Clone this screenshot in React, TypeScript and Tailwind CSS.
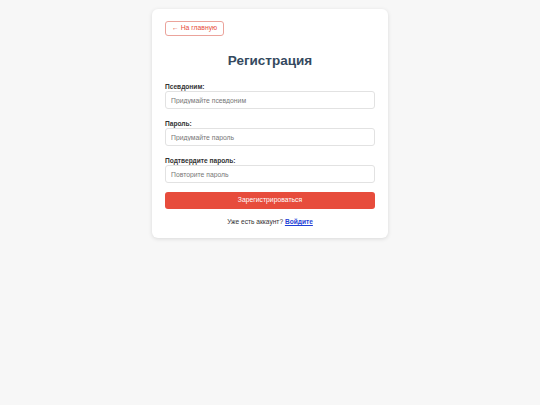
export default function App() {
  return (
    <div className="min-h-screen bg-[#f7f7f7] pt-[9px] font-['Liberation_Sans',Arial,sans-serif]">
      <div className="mx-auto w-[236px] rounded-[6px] bg-white px-[13px] pt-[12px] pb-[11px] shadow-[0_1px_4px_rgba(0,0,0,0.12)]">
        <button className="flex h-[15px] items-center rounded-[3px] border border-[#eba39b] px-[6px] text-[6.8px] text-[#e74c3c]">
          ← На главную
        </button>

        <h1 className="mt-[16px] text-center text-[13.5px] font-bold leading-[17px] text-[#34495e]">
          Регистрация
        </h1>

        <form className="mt-[13px]" onSubmit={e => e.preventDefault()}>
          <label className="block text-[6.6px] font-bold leading-[9px] text-[#333]">Псевдоним:</label>
          <input
            className="block h-[18px] w-full rounded-[3px] border border-[#e2e2e2] px-[5px] text-[6.8px] outline-none placeholder:text-[#777]"
            placeholder="Придумайте псевдоним"
          />

          <label className="mt-[10px] block text-[6.6px] font-bold leading-[9px] text-[#333]">Пароль:</label>
          <input
            type="password"
            className="block h-[18px] w-full rounded-[3px] border border-[#e2e2e2] px-[5px] text-[6.8px] outline-none placeholder:text-[#777]"
            placeholder="Придумайте пароль"
          />

          <label className="mt-[10px] block text-[6.6px] font-bold leading-[9px] text-[#333]">Подтвердите пароль:</label>
          <input
            type="password"
            className="block h-[18px] w-full rounded-[3px] border border-[#e2e2e2] px-[5px] text-[6.8px] outline-none placeholder:text-[#777]"
            placeholder="Повторите пароль"
          />

          <button className="mt-[9px] block h-[17px] w-full rounded-[3px] bg-[#e74c3c] text-[6.8px] text-white">
            Зарегистрироваться
          </button>
        </form>

        <p className="mt-[8px] text-center text-[6.6px] leading-[10px] text-[#333]">
          Уже есть аккаунт? <a href="#" className="font-bold text-[#1f3fd6] underline">Войдите</a>
        </p>
      </div>
    </div>
  );
}
